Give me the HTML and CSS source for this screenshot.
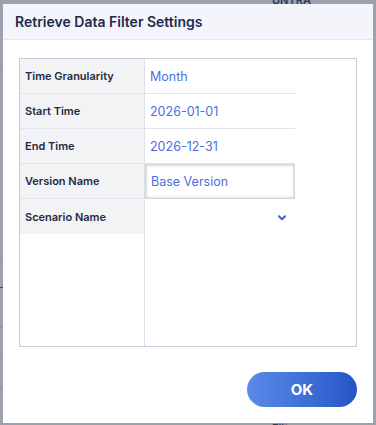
FILE: index.html
```html
<!DOCTYPE html>
<html lang="en">
<head>
  <meta charset="UTF-8" />
  <meta name="viewport" content="width=device-width, initial-scale=1.0" />
  <title>Retrieve Data Filter Settings</title>
  <link rel="stylesheet" href="styles.css">
</head>
<body>
  <div class="backdrop">
    <span class="behind-top">UNTRA</span>
    <span class="behind-bottom">Filter</span>
    <div class="dialog">
      <div class="dialog-head">
        <h2>Retrieve Data Filter Settings</h2>
      </div>
      <div class="dialog-body">
        <div class="form">
          <div class="labels">
            <div class="cell">Time Granularity</div>
            <div class="cell">Start Time</div>
            <div class="cell">End Time</div>
            <div class="cell">Version Name</div>
            <div class="cell last">Scenario Name</div>
          </div>
          <div class="values">
            <div class="cell">Month</div>
            <div class="cell">2026-01-01</div>
            <div class="cell">2026-12-31</div>
            <div class="cell input">Base Version</div>
            <div class="cell last select">
              <svg width="8" height="6" viewBox="0 0 8 6"><path d="M1 1.2 L4 4.2 L7 1.2" fill="none" stroke="#3b63dc" stroke-width="2" stroke-linecap="round" stroke-linejoin="round"/></svg>
            </div>
          </div>
        </div>
      </div>
      <div class="dialog-foot">
        <button class="btn-ok">OK</button>
      </div>
    </div>
  </div>
</body>
</html>
```

FILE: styles.css
```css
* { margin: 0; padding: 0; box-sizing: border-box; }
body {
  font-family: 'Inter', 'Noto Sans', sans-serif;
  background: #9ca1ad;
  width: 376px;
  height: 425px;
  overflow: hidden;
}
.backdrop {
  position: relative;
  height: 425px;
  padding: 4px 3px 0 3px;
  background:
    linear-gradient(#8d93a1, #8d93a1) 0 26px / 3px 1px no-repeat,
    linear-gradient(#8d93a1, #8d93a1) 0 66px / 3px 1px no-repeat,
    linear-gradient(#8d93a1, #8d93a1) 0 257px / 3px 1px no-repeat,
    linear-gradient(#3c4660, #3c4660) 0 287px / 3px 1px no-repeat,
    linear-gradient(#8d93a1, #8d93a1) 0 327px / 3px 1px no-repeat,
    linear-gradient(#8d93a1, #8d93a1) 0 357px / 3px 1px no-repeat,
    linear-gradient(#8d93a1, #8d93a1) 0 387px / 3px 1px no-repeat,
    #9ca1ad;
}
.behind-top {
  position: absolute;
  top: -7px;
  left: 272px;
  font-size: 11px;
  font-weight: 600;
  color: #2d3a5c;
}
.behind-bottom {
  position: absolute;
  top: 421px;
  left: 272px;
  font-size: 11px;
  font-weight: 600;
  color: #2d3a5c;
}
.dialog {
  position: relative;
  width: 370px;
  height: 419px;
  background: #fff;
  display: flex;
  flex-direction: column;
}
.dialog-head {
  height: 36px;
  background: #f4f5fb;
  border-bottom: 1px solid #e4e7f0;
  padding-left: 12px;
  display: flex;
  align-items: center;
}
.dialog-head h2 {
  font-size: 14px;
  font-weight: 600;
  color: #1e2a4c;
}
.dialog-body {
  padding: 18px 16px 0 16px;
}
.form {
  display: flex;
  height: 289px;
  border: 1px solid #c4cbd9;
}
.labels {
  width: 125px;
  border-right: 1px solid #dde0e7;
}
.labels .cell {
  background: #f2f3f5;
  color: #1f2a44;
  font-size: 11px;
  font-weight: 600;
  padding-left: 5px;
}
.values {
  width: 150px;
}
.values .cell {
  color: #4a6fe0;
  font-size: 12.5px;
  padding-left: 5px;
}
.cell {
  height: 35px;
  border-bottom: 1px solid #e3e5ea;
  display: flex;
  align-items: center;
}
.cell.last { border-bottom: none; }
.values .input {
  border: 1px solid #d3d6dd;
  box-shadow: inset 0 0 3px rgba(60, 70, 90, 0.35);
}
.values .select {
  justify-content: flex-end;
  padding-right: 9px;
  padding-top: 3px;
}
.dialog-foot {
  display: flex;
  justify-content: flex-end;
  padding: 25px 16px 0 0;
}
.btn-ok {
  width: 110px;
  height: 35px;
  border: none;
  border-radius: 18px;
  background: linear-gradient(90deg, #5a8be8, #2656c6);
  color: #fff;
  font-family: 'Inter', sans-serif;
  font-size: 15px;
  font-weight: 700;
  cursor: pointer;
}
```
